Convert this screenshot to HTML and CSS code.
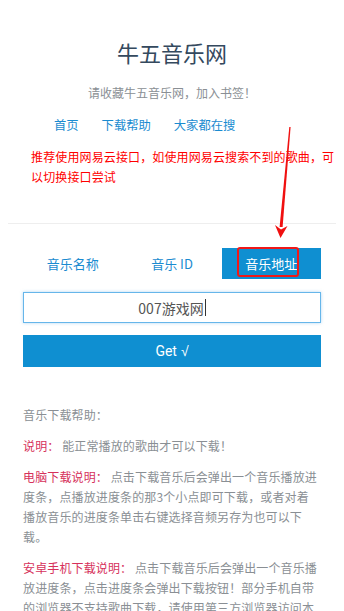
FILE: index.html
```html
<!DOCTYPE html>
<html lang="zh-CN">
<head>
<meta charset="utf-8">
<title>牛五音乐网</title>
<link rel="stylesheet" href="styles.css">
</head>
<body>
<div class="page">
  <header class="header">
    <h1 class="title">牛五音乐网</h1>
    <p class="subtitle">请收藏牛五音乐网，加入书签！</p>
    <nav class="nav">
      <a class="nav-link">首页</a>
      <a class="nav-link">下载帮助</a>
      <a class="nav-link">大家都在搜</a>
    </nav>
  </header>
  <p class="notice">推荐使用网易云接口，如使用网易云搜索不到的歌曲，可以切换接口尝试</p>
  <div class="divider"></div>
  <div class="tabs">
    <div class="tab">音乐名称</div>
    <div class="tab">音乐 ID</div>
    <div class="tab tab-active">音乐地址<span class="mark-box"></span></div>
  </div>
  <div class="input-box"><span class="input-text">007游戏网</span><span class="caret"></span></div>
  <div class="btn">Get <span class="check">√</span></div>
  <section class="help">
    <p class="help-title">音乐下载帮助：</p>
    <p class="help-item"><span class="label">说明：</span> 能正常播放的歌曲才可以下载！</p>
    <p class="help-item"><span class="label">电脑下载说明：</span> 点击下载音乐后会弹出一个音乐播放进度条，点播放进度条的那3个小点即可下载，或者对着播放音乐的进度条单击右键选择音频另存为也可以下载。</p>
    <p class="help-item"><span class="label">安卓手机下载说明：</span> 点击下载音乐后会弹出一个音乐播放进度条，点击进度条会弹出下载按钮！部分手机自带的浏览器不支持歌曲下载，请使用第三方浏览器访问本站下载。</p>
  </section>
  <svg class="arrow" width="344" height="250" viewBox="0 0 344 250" aria-hidden="true">
    <polygon points="289.3,127 290.6,127 282.6,227 279.6,227" fill="#f01010"/>
    <polygon points="275,225 281,229.5 287.5,226 280.5,238" fill="#f01010"/>
  </svg>
</div>
</body>
</html>
```
FILE: styles.css
```css
* { box-sizing: border-box; }
html, body { margin: 0; padding: 0; background: #fff; }
body {
  font-family: "Noto Sans CJK SC", "Noto Sans", sans-serif;
  color: #888;
}
.page { position: relative; width: 344px; }
.header { text-align: center; }
.title {
  margin: 0;
  padding-top: 37px;
  font-size: 22px;
  line-height: 30px;
  font-weight: normal;
  color: #34495e;
}
.subtitle {
  margin: 16px 0 0;
  font-size: 12px;
  line-height: 20px;
  color: #8a8f94;
}
.nav {
  margin-top: 12px;
  display: flex;
  justify-content: flex-start;
  gap: 23px;
  padding-left: 54px;
  line-height: 20px;
  font-size: 12.3px;
}
.nav-link { color: #1a8bd0; text-decoration: none; }
.notice {
  margin: 12px 0 0;
  padding: 0 8px 0 31px;
  font-size: 12px;
  letter-spacing: 0.13px;
  line-height: 20px;
  color: #ff0000;
}
.divider {
  margin: 36px 8px 0;
  height: 1px;
  background: #eeeeee;
}
.tabs {
  margin: 24px 23px 0;
  display: flex;
  height: 31px;
}
.tab {
  position: relative;
  flex: 1;
  display: flex;
  align-items: center;
  justify-content: center;
  font-size: 13px;
  color: #1a8bd0;
}
.tab-active { background: #0f8fd1; color: #fff; }
.mark-box {
  position: absolute;
  left: 15px;
  top: -1px;
  width: 62px;
  height: 30px;
  border: 2px solid #f01818;
  border-radius: 3px;
}
.input-box {
  margin: 13px 23px 0;
  height: 31px;
  border: 1px solid #66b6ea;
  box-shadow: 0 0 3px rgba(102, 175, 233, 0.5);
  display: flex;
  align-items: center;
  justify-content: center;
  font-size: 14px;
  color: #555;
}
.caret { display: inline-block; width: 1px; height: 17px; background: #333; margin-left: 1px; }
.btn {
  margin: 12px 23px 0;
  height: 32px;
  background: #0f8fd1;
  color: #fff;
  font-family: Roboto, "Noto Sans", sans-serif;
  font-size: 14px;
  display: flex;
  align-items: center;
  justify-content: center;
}
.check { font-family: "Liberation Sans", sans-serif; margin-left: 4px; }
.help {
  margin: 38px 25px 0 23px;
  font-size: 12px;
  letter-spacing: 0.13px;
  line-height: 20px;
  color: #8a8f94;
}
.help p { margin: 0; }
.help-item { margin-top: 11px !important; }
.label { color: #d6315b; }
.arrow { position: absolute; left: 0; top: 0; pointer-events: none; }
```
